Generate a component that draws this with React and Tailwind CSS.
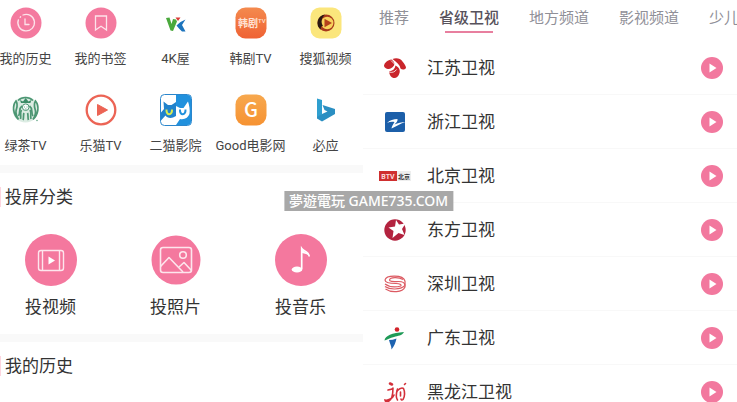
const HistoryIcon = () => (
  <svg viewBox="0 0 32 32" className="size-8" aria-hidden="true">
    <circle cx="16" cy="16" r="15.5" fill="#f47a9f" />
    <g fill="none" stroke="#fde3ea" strokeWidth="1.3" strokeLinecap="round">
      <path d="M13 8a8.3 8.3 0 1 1-4.6 4.8" />
      <path d="M10.2 10.2l.4-.4" />
      <path d="M15 12v5.5h4" />
    </g>
  </svg>
);

const BookmarkIcon = () => (
  <svg viewBox="0 0 32 32" className="size-8" aria-hidden="true">
    <circle cx="16" cy="16" r="15.5" fill="#f47a9f" />
    <path d="M10.5 9h11v14L16 19.3 10.5 23z" fill="none" stroke="#fde3ea" strokeWidth="1.3" />
  </svg>
);

const WkIcon = () => (
  <svg viewBox="0 0 32 32" className="size-8" aria-hidden="true">
    <path d="M6 11l3.5-.5 2 6.5 1.5-5 3 .5 1 2-4 9.500-2.500-.5z" fill="#4aa93c" />
    <path d="M15.500 10.500h5L18 14z" fill="#d93a34" />
    <path d="M25.500 12.500l-3.500 5.500 3.500 6.500H22l-3-3-2.500-3 4-3.500z" fill="#1c74bd" />
  </svg>
);

const HanjuIcon = () => (
  <svg viewBox="0 0 32 32" className="size-8" aria-hidden="true">
    <defs>
      <linearGradient id="hanju" x1="0" y1="0" x2="0" y2="1">
        <stop offset="0" stopColor="#f48a4e" />
        <stop offset="1" stopColor="#ef6234" />
      </linearGradient>
    </defs>
    <rect x=".5" y=".5" width="31" height="31" rx="10" fill="url(#hanju)" />
    <text x="3" y="19.5" fontSize="10" fontWeight="700" fill="#ffe2d4" className="font-['Noto_Sans_CJK_SC',sans-serif]">韩剧</text>
    <text x="23" y="16" fontSize="6" fontWeight="500" fill="#ffe2d4" className="font-['Roboto',sans-serif]">TV</text>
  </svg>
);

const SohuIcon = () => (
  <svg viewBox="0 0 32 32" className="size-8" aria-hidden="true">
    <rect x=".5" y=".5" width="31" height="31" rx="9" fill="#fbe67c" />
    <circle cx="16" cy="16" r="8.5" fill="#a83a1c" />
    <circle cx="17.2" cy="16" r="6.2" fill="#f9d25c" />
    <path d="M15 7.5a8.500 8.500 0 0 0-4 15.300c-.5-1.300-.3-2.300.2-3.300l1.800-.5c-2.500-4-1.500-8 2-11.500z" fill="#2b1812" />
    <path d="M14.5 11.800l7.500 4.200-7.500 4.200z" fill="#b5401c" />
  </svg>
);

const TeaIcon = () => (
  <svg viewBox="0 0 32 32" className="size-8" aria-hidden="true">
    <circle cx="15.5" cy="15.5" r="13" fill="#dcece3" />
    <g fill="none" stroke="#4c9673" strokeWidth="1.7">
      <path d="M8.500 25.500C3 20 2 12 6 7c2.500 4 .5 7 0 10s1 5.500 2.500 8.500z" />
      <path d="M23 25.500C28.500 20 29.500 12 25.500 7c-2.500 4-.5 7 0 10s-1 5.500-2.500 8.500z" />
      <path d="M12 12c-4 3-1 6-3.500 10M19.500 12c4 3 1 6 3.500 10" />
      <path d="M11.500 16c-2 3 0 5-1 9M20 16c2 3 0 5 1 9M14 19c-1 2 0 5-1 7M17.500 19c1 2 0 5 1 7" />
      <path d="M8 6.500c4-4 11-4 15 0" />
    </g>
    <path d="M11 9l-1-3 3 1.500L15.700 4l2.700 3.500 3-1.500-1 3z" fill="#3c8c67" />
    <circle cx="15.700" cy="13.200" r="3.300" fill="#fff" stroke="#4c9673" />
    <path d="M14 13h1M16.500 13h1M15 15h1.500" stroke="#4c9673" strokeWidth=".8" />
    <circle cx="27" cy="26.500" r=".8" fill="#6aa98a" />
  </svg>
);

const LemaoIcon = () => (
  <svg viewBox="0 0 32 32" className="size-8" aria-hidden="true">
    <circle cx="16" cy="16" r="14.3" fill="#fff" stroke="#ec6455" strokeWidth="2.3" />
    <path d="M12.5 10.5l10 5.500-10 5.500z" fill="#ec6455" stroke="#ec6455" strokeLinejoin="round" />
  </svg>
);

const TwoCatsIcon = () => (
  <svg viewBox="0 0 32 32" className="size-8" aria-hidden="true">
    <rect x=".5" y=".5" width="31" height="31" rx="4" fill="#fff" stroke="#2b86cc" />
    <path d="M16 1h11.500A3.500 3.500 0 0 1 31 4.500v23a3.500 3.500 0 0 1-3.500 3.500H16z" fill="#2191dd" />
    {/* blue cat on white */}
    <path d="M3.500 7.500L8 11h3.500L16 8v14l-3 1.500c-3 1-6.500 0-7.500-2l-4.500 5v-8L4 15z" fill="#2183cc" />
    {/* white cat on blue */}
    <path d="M16 12l4 2h3.500L28 7.500c1.500 4 2 9 1.500 12-1 4-5 6.500-9.500 5.500L16 31z" fill="#fff" />
    <path d="M6.500 15.500c-.5 6.500 6 6 5.500 0" fill="none" stroke="#d8ec52" strokeWidth="2" />
    <path d="M20 15.500c-.5 6.500 6 6 5.500 0" fill="none" stroke="#2191dd" strokeWidth="2" />
  </svg>
);

const GoodIcon = () => (
  <svg viewBox="0 0 32 32" className="size-8" aria-hidden="true">
    <defs>
      <linearGradient id="good" x1="0" y1="0" x2="0" y2="1">
        <stop offset="0" stopColor="#f7a84e" />
        <stop offset="1" stopColor="#f69232" />
      </linearGradient>
    </defs>
    <rect x=".5" y=".5" width="31" height="31" rx="10" fill="url(#good)" />
    <text x="16" y="23" textAnchor="middle" fontSize="20" fontWeight="500" fill="#fff" className="font-['Noto_Sans_CJK_SC',sans-serif]">G</text>
  </svg>
);

const BingIcon = () => (
  <svg viewBox="0 0 32 32" className="size-8" aria-hidden="true">
    <path d="M7 4.500l5 1.500v14.500l-5 4z" fill="#2f9fcf" />
    <path d="M7 23l5-3 5.500-2.500-3-1.500-2-5L25 15v5l-13 7.500-5-3z" fill="#2b8fc2" />
  </svg>
);

const CastVideoIcon = () => (
  <svg viewBox="0 0 52 52" className="size-[52px]" aria-hidden="true">
    <circle cx="26" cy="26" r="26" fill="#f4789e" />
    <g fill="none" stroke="#fde6ed" strokeWidth="1.4">
      <rect x="13.5" y="16.5" width="25" height="20" rx="2.5" />
      <path d="M17.5 17v19M34.5 17v19" />
    </g>
    <path d="M23.5 22.500l6.500 4-6.500 4z" fill="#fff" />
  </svg>
);

const CastPhotoIcon = () => (
  <svg viewBox="0 0 52 52" className="size-[52px]" aria-hidden="true">
    <circle cx="26" cy="26" r="24.5" fill="#f4789e" />
    <g fill="none" stroke="#fde6ed" strokeWidth="1.6" strokeLinejoin="round">
      <rect x="10.5" y="13.5" width="31" height="25" rx="2.5" />
      <circle cx="33" cy="21" r="3.3" />
      <path d="M10.5 32.500l8.500-9 14 14.500" />
      <path d="M29 33l5-4.500 7.500 8" />
    </g>
  </svg>
);

const CastMusicIcon = () => (
  <svg viewBox="0 0 52 52" className="size-[52px]" aria-hidden="true">
    <circle cx="26" cy="26" r="26" fill="#f4789e" />
    <ellipse cx="22" cy="35.5" rx="5.3" ry="3" fill="#fff" />
    <path d="M26.700 35V14.500c2 3 7 2.500 7.500 8" fill="none" stroke="#fff" strokeWidth="1.7" />
    <path d="M27 15c1 3 6 3 7.500 7-2-2-5-2.500-7.500-3z" fill="#fff" />
  </svg>
);

const JiangsuLogo = () => (
  <svg viewBox="0 0 24 24" className="size-6" aria-hidden="true">
    <g fill="#c9252b">
      <path d="M9.500 3c4-1.500 8-.5 10 2.500 2 2.500 3.500 4.500 3.500 6.500-1.500 2-4 2-5.500.5C17 9 14 6.500 9.500 3z" />
      <path d="M1 9.500C1.500 6.500 5 4 8.500 3.500c3 2.500 3.500 4.500 2.500 6-1.500 2-3.500 3.500-5.500 3.500S1 11.500 1 9.500z" />
      <path d="M6 15.500c3.500-.5 6-2.500 6.500-6 3.500 1.500 5 4.500 4 7.500-1 4-3.500 5.500-6 5-2.500-.5-4-3-4.500-6.500z" />
    </g>
    <path d="M6 16c3 1 6 0 7.500-2.500M8 4.500l4.500 4.500" fill="none" stroke="#fff" strokeWidth=".8" />
  </svg>
);

const ZhejiangLogo = () => (
  <svg viewBox="0 0 24 24" className="size-6" aria-hidden="true">
    <rect x="2" y="2" width="20" height="20" rx="2" fill="#1c5fa9" />
    <path d="M4 13c3-3 6.500-4 10.500-4 .5 2-1.500 4-3 5.500 3.500-1.500 7-2.500 11-2.500-5 1.500-9 4-14 6.500 0-2 2-4.500 3-6.500-3-.5-5 0-7.500 1z" fill="#fff" />
  </svg>
);

const BeijingLogo = () => (
  <svg viewBox="0 0 32 12" className="h-3 w-8" aria-hidden="true">
    <rect x="0" y="1" width="18" height="10" fill="#cf2f2f" />
    <rect x="18" y="1" width="14" height="10" fill="#eeeeee" />
    <text x="9" y="8.5" textAnchor="middle" fontSize="7" fontWeight="700" fill="#fbdcdc" className="font-['Roboto',sans-serif]">BTV</text>
    <text x="25" y="8.5" textAnchor="middle" fontSize="6" fontWeight="700" fill="#333" className="font-['Noto_Sans_CJK_SC',sans-serif]">北京</text>
  </svg>
);

const DongfangLogo = () => (
  <svg viewBox="0 0 24 24" className="size-6" aria-hidden="true">
    <circle cx="12" cy="12" r="10.7" fill="#b3233f" />
    <path d="M13 2l3 4.500 6.500-1-3.500 5.500 2.500 6-6-2-6 5 1-7-5-3.500 6.500-1z" fill="#fff" />
  </svg>
);

const ShenzhenLogo = () => (
  <svg viewBox="0 0 24 24" className="size-6" aria-hidden="true">
    <g fill="none" stroke="#dc5a62" strokeWidth="1.2">
      <path d="M22 9C20 2.500 3 3 2 8c0 3 6 3.500 11 3.500 4 0 5.500 1 5 2.500" />
      <path d="M20 7.500C16 5 7 5 6.500 8c0 2 5 1.500 9 1.500s6.500 1.500 6.500 4" />
      <path d="M2 12c4 3 10 3.500 16 2" />
      <path d="M2 14.500c5 3.500 15 3.500 20-1" />
      <path d="M2.500 17c6 4 17 3.500 19.500-2V9" />
    </g>
  </svg>
);

const GuangdongLogo = () => (
  <svg viewBox="0 0 24 24" className="size-6" aria-hidden="true">
    <circle cx="14" cy="3.5" r="2.3" fill="#d2232a" />
    <path d="M1.500 14.500C2 9.500 9 7 21 6c-2 4-6 3.500-10 5-4 1-6.500 2.500-9.500 3.500z" fill="#1f9a57" />
    <path d="M6 14c2.500 0 5-.5 7.500-1.500-1 4-2 7.500-5 11 0-3.500-1.500-5.500-2.500-9.500z" fill="#1d63b0" />
  </svg>
);

const HeilongjiangLogo = () => (
  <svg viewBox="0 0 24 24" className="size-6" aria-hidden="true">
    <g fill="none" stroke="#d3303a" strokeWidth="1.6" strokeLinecap="round">
      <path d="M7 3.500l2 1" strokeWidth="2.6" />
      <path d="M5 10c3-.5 5-1.500 5-2.500 0 6-1 13-5 14-2 .5-3-.5-3-1.500 3 1 8-2 9-5" />
      <path d="M14.500 9c-1.500 5-1.500 9 0 11" />
      <path d="M14 11c2-2 5-3.500 6.500-2.500 1.500 3 1.500 8-.5 11-1 1-2 .5-2-.5" />
      <path d="M17.500 12v4M21.500 4.500l1-1" />
    </g>
  </svg>
);

const PlayGlyph = () => (
  <svg viewBox="0 0 10 10" className="size-[10px]" aria-hidden="true">
    <path d="M2.500.5L9.500 5l-7 4.500z" fill="#fff" />
  </svg>
);

const sites = [
  { name: '我的历史', Icon: HistoryIcon },
  { name: '我的书签', Icon: BookmarkIcon },
  { name: '4K屋', Icon: WkIcon },
  { name: '韩剧TV', Icon: HanjuIcon },
  { name: '搜狐视频', Icon: SohuIcon },
  { name: '绿茶TV', Icon: TeaIcon },
  { name: '乐猫TV', Icon: LemaoIcon },
  { name: '二猫影院', Icon: TwoCatsIcon },
  { name: 'Good电影网', Icon: GoodIcon },
  { name: '必应', Icon: BingIcon },
];

const castTypes = [
  { name: '投视频', Icon: CastVideoIcon },
  { name: '投照片', Icon: CastPhotoIcon },
  { name: '投音乐', Icon: CastMusicIcon },
];

const tabs = ['推荐', '省级卫视', '地方频道', '影视频道', '少儿'];

const channels = [
  { name: '江苏卫视', Logo: JiangsuLogo },
  { name: '浙江卫视', Logo: ZhejiangLogo },
  { name: '北京卫视', Logo: BeijingLogo },
  { name: '东方卫视', Logo: DongfangLogo },
  { name: '深圳卫视', Logo: ShenzhenLogo },
  { name: '广东卫视', Logo: GuangdongLogo },
  { name: '黑龙江卫视', Logo: HeilongjiangLogo },
];

const SectionTitle = ({ children }) => (
  <div className="flex items-center gap-1 pt-3 pl-2">
    <span className="h-5 w-[5px] bg-[#fdd5df]" />
    <h2 className="text-[17px] leading-6 text-[#333]">{children}</h2>
  </div>
);

const HomePanel = () => (
  // Pulled left so the first column sits against the screen edge
  <section className="-ml-3">
    <div className="grid grid-cols-5 gap-y-[25px] pt-[7px] pb-[9px]">
      {sites.map(({ name, Icon }) => (
        <a key={name} href="#" className="flex flex-col items-center gap-[10px]">
          <Icon />
          <span className="text-[13px] leading-5 whitespace-nowrap text-[#444]">{name}</span>
        </a>
      ))}
    </div>

    <div className="h-2 bg-[#f9f9f9]" />

    <SectionTitle>投屏分类</SectionTitle>
    <div className="grid grid-cols-3 pt-[25px] pb-[15px]">
      {castTypes.map(({ name, Icon }) => (
        <button key={name} type="button" className="flex flex-col items-center gap-[9px]">
          <Icon />
          <span className="text-[17px] leading-6 text-[#333]">{name}</span>
        </button>
      ))}
    </div>

    <div className="h-2 bg-[#f9f9f9]" />

    <SectionTitle>我的历史</SectionTitle>
  </section>
);

const ChannelPanel = () => (
  <section className="min-w-0">
    <nav className="flex h-[41px] gap-[30px] overflow-hidden pt-[7px] pl-4">
      {tabs.map((tab) => (
        <button
          key={tab}
          type="button"
          className={
            tab === '省级卫视'
              ? 'flex shrink-0 flex-col items-center text-[15px] leading-[22px] font-medium text-[#57525c]'
              : 'flex shrink-0 flex-col items-center text-[15px] leading-[22px] text-[#909098]'
          }
        >
          {tab}
          {tab === '省级卫视' && <span className="mt-[2px] h-[2px] w-12 bg-[#e87f9f]" />}
        </button>
      ))}
    </nav>

    <ul>
      {channels.map(({ name, Logo }) => (
        <li key={name} className="flex h-[54px] items-center gap-4 border-b border-[#f8f8f8] pr-[14px] pl-4">
          <span className="flex w-8 justify-center">
            <Logo />
          </span>
          <span className="flex-1 text-[17px] leading-6 text-[#333]">{name}</span>
          <button
            type="button"
            aria-label={`播放${name}`}
            className="flex size-[22px] items-center justify-center rounded-full bg-[#f2789e]"
          >
            <PlayGlyph />
          </button>
        </li>
      ))}
    </ul>
  </section>
);

const App = () => (
  <main className="relative grid h-screen grid-cols-[363fr_374fr] overflow-hidden bg-white font-['Roboto','Noto_Sans_CJK_SC',sans-serif]">
    <HomePanel />
    <ChannelPanel />
    <p className="absolute top-[191px] left-1/2 -translate-x-1/2 bg-[#a8a8a8] px-[5px] font-['Noto_Sans','Noto_Sans_CJK_TC',sans-serif] text-[14px] leading-5 font-medium whitespace-nowrap text-white">
      夢遊電玩 GAME735.COM
    </p>
  </main>
);

export default App;
